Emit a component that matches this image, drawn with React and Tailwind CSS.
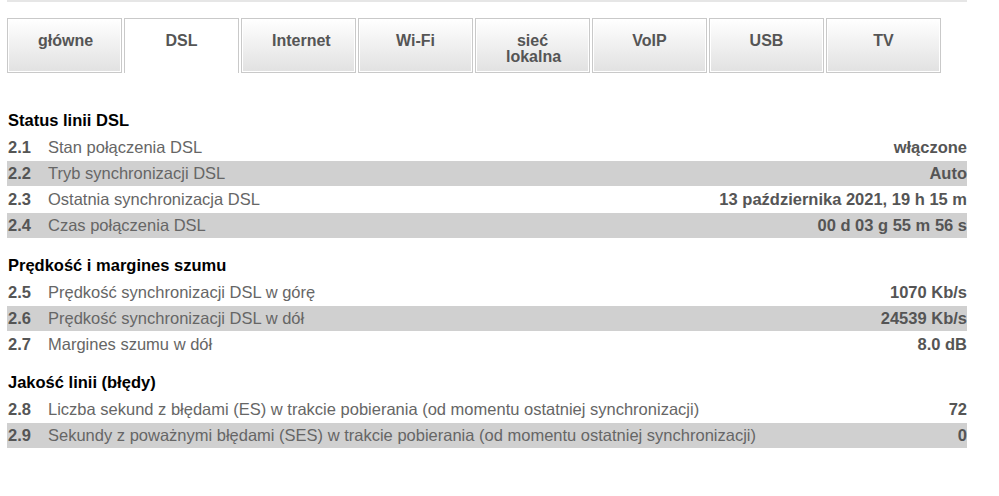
import React from "react";

const TABS = ["główne", "DSL", "Internet", "Wi-Fi", "sieć lokalna", "VoIP", "USB", "TV"];

const SECTIONS = [
  {
    title: "Status linii DSL",
    gap: "mt-[38px]",
    rows: [
      ["2.1", "Stan połączenia DSL", "włączone"],
      ["2.2", "Tryb synchronizacji DSL", "Auto"],
      ["2.3", "Ostatnia synchronizacja DSL", "13 października 2021, 19 h 15 m"],
      ["2.4", "Czas połączenia DSL", "00 d 03 g 55 m 56 s"],
    ],
  },
  {
    title: "Prędkość i margines szumu",
    gap: "mt-[17px]",
    rows: [
      ["2.5", "Prędkość synchronizacji DSL w górę", "1070 Kb/s"],
      ["2.6", "Prędkość synchronizacji DSL w dół", "24539 Kb/s"],
      ["2.7", "Margines szumu w dół", "8.0 dB"],
    ],
  },
  {
    title: "Jakość linii (błędy)",
    gap: "mt-[15px]",
    rows: [
      ["2.8", "Liczba sekund z błędami (ES) w trakcie pobierania (od momentu ostatniej synchronizacji)", "72"],
      ["2.9", "Sekundy z poważnymi błędami (SES) w trakcie pobierania (od momentu ostatniej synchronizacji)", "0"],
    ],
  },
];

function Tabs() {
  return (
    <div className="flex gap-[2px] mt-[16px] text-[16px]">
      {TABS.map((tab) =>
        tab === "DSL" ? (
          <div
            key={tab}
            className="w-[115px] h-[55px] border border-b-0 border-[#c9c9c9] bg-white text-center pt-[14px] leading-[16px] font-bold text-[#555]"
          >
            {tab}
          </div>
        ) : (
          <div
            key={tab}
            className="w-[115px] h-[55px] border border-[#c9c9c9] bg-gradient-to-b from-white to-[#e1e1e1] shadow-[inset_0_0_0_1px_#ffffff] text-center pt-[14px] px-[30px] leading-[16px] font-bold text-[#555]"
          >
            {tab}
          </div>
        )
      )}
    </div>
  );
}

function Section({ title, rows, gap }) {
  return (
    <div className={gap}>
      <h2 className="h-[18px] leading-[18px] pl-[1px] font-bold text-black mb-[6px]">{title}</h2>
      {rows.map(([num, label, value], i) => (
        <div
          key={num}
          className={`flex items-center h-[26px] border-b border-white ${i % 2 === 1 ? "bg-[#d0d0d0]" : "bg-white"}`}
        >
          <span className="w-[41px] pl-[1px] font-bold text-[#555]">{num}</span>
          <span className="flex-1 text-[#666]">{label}</span>
          <span className="font-bold text-[#555] text-right">{value}</span>
        </div>
      ))}
    </div>
  );
}

export default function App() {
  return (
    <div className="w-[999px] h-[496px] bg-white font-['Liberation_Sans',Arial,sans-serif] text-[16.5px]">
      <div className="ml-[7px] w-[960px]">
        <div className="h-[2px] bg-[#e6e6e6]" />
        <Tabs />
        {SECTIONS.map((s) => (
          <Section key={s.title} title={s.title} rows={s.rows} gap={s.gap} />
        ))}
      </div>
    </div>
  );
}
